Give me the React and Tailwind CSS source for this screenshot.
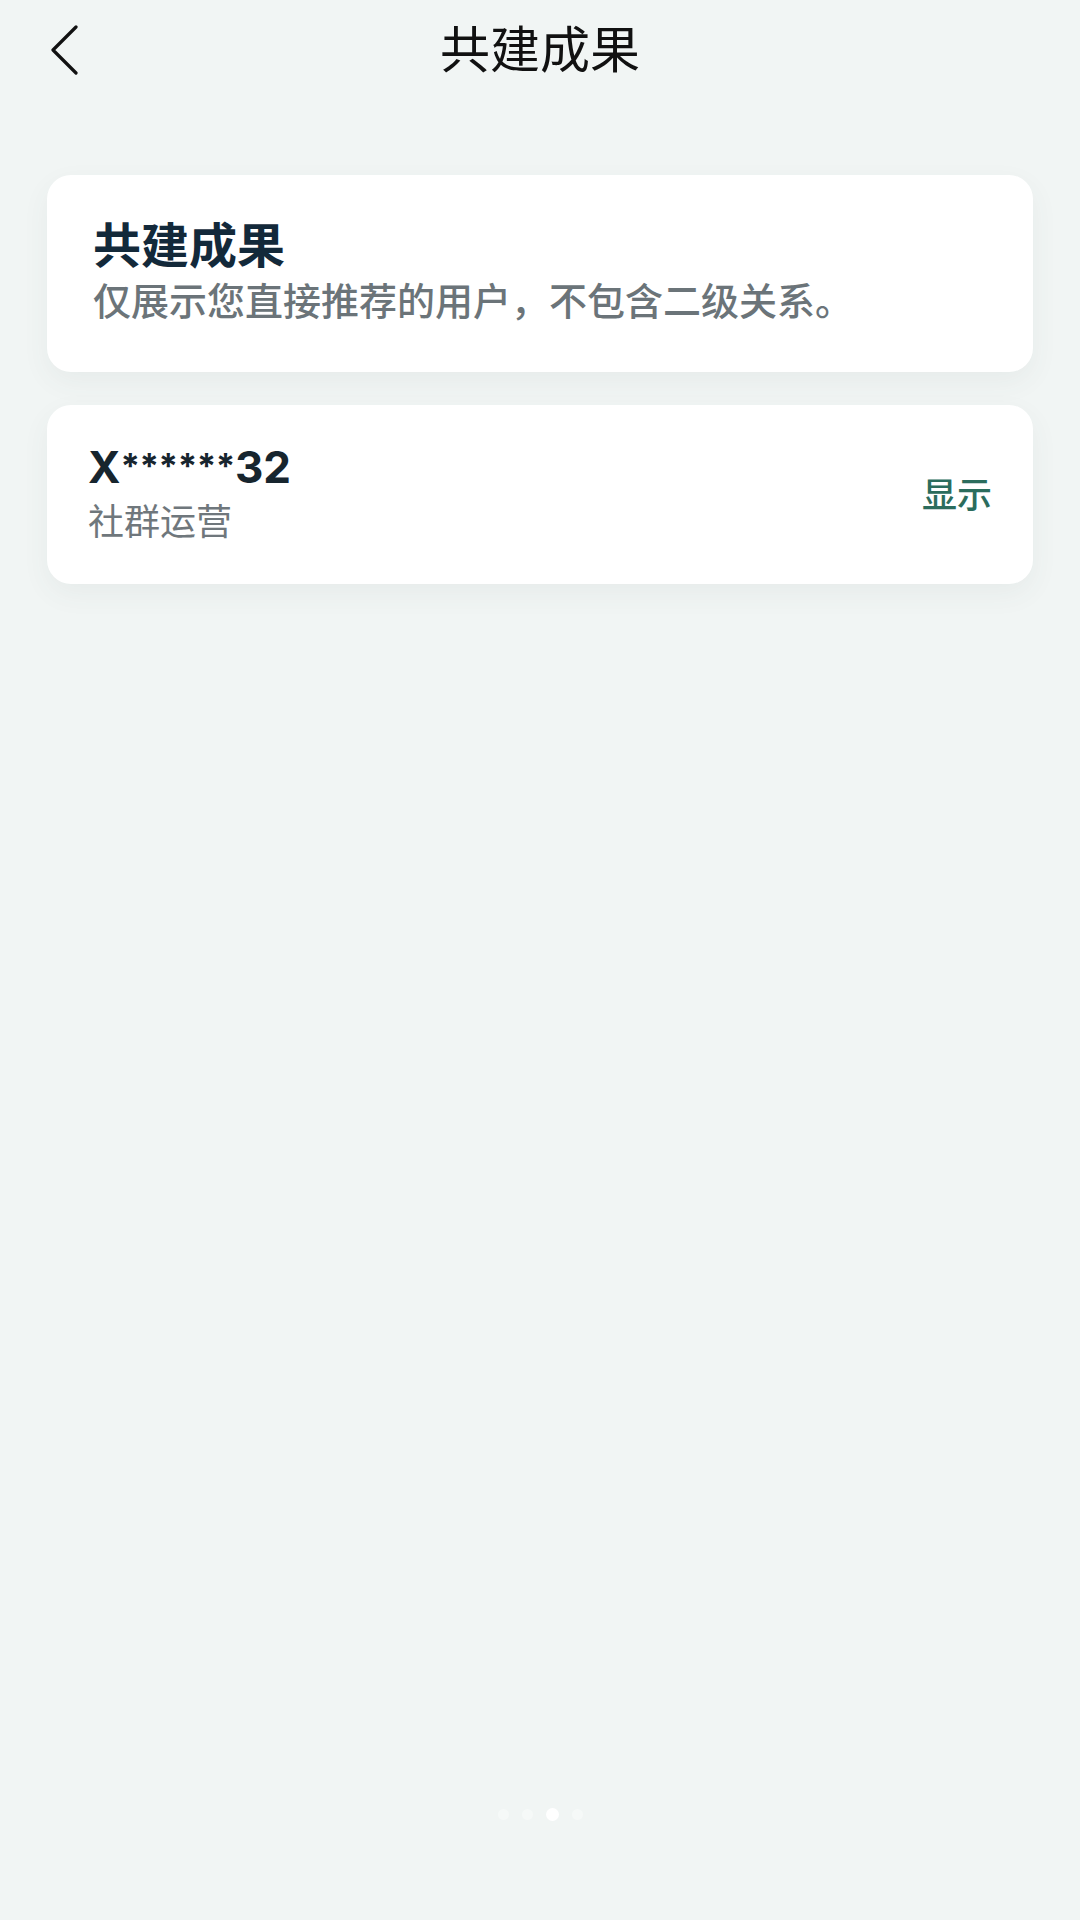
import React from "react";

const App = () => {
	return (
		<div className="min-h-[1920px] w-[1080px] bg-[#f1f5f4] flex flex-col font-['Inter','Noto_Sans_CJK_SC',sans-serif]">
			{/* Header */}
			<div className="relative h-[96px] flex items-center justify-center">
				<button className="absolute left-[44px] top-[22px] w-[40px] h-[56px] flex items-center justify-center">
					<svg width="32" height="50" viewBox="0 0 32 50" fill="none">
						<path d="M28 2 L5 25 L28 48" stroke="#111" strokeWidth="3.2" strokeLinecap="round" strokeLinejoin="round" />
					</svg>
				</button>
				<h1 className="-mt-[5px] text-[50px] leading-[60px] text-[#111] font-['Noto_Sans_CJK_SC',sans-serif] font-normal">共建成果</h1>
			</div>

			<div className="flex flex-col gap-[33px] px-[47px] mt-[79px]">
				{/* Intro card */}
				<div className="bg-white rounded-[24px] pl-[46px] pr-[40px] pt-[39px] pb-[49px] shadow-[0_10px_28px_rgba(60,80,80,0.06)]">
					<div className="text-[48px] leading-[56px] font-bold text-[#13293a] font-['Noto_Sans_CJK_SC',sans-serif]">共建成果</div>
					<div className="mt-[5px] text-[38px] leading-[48px] text-[#6b7479] font-medium font-['Noto_Sans_CJK_SC',sans-serif]">
						仅展示您直接推荐的用户，不包含二级关系。
					</div>
				</div>

				{/* Member card */}
				<div className="bg-white rounded-[24px] pl-[41px] pr-[41px] h-[179px] flex items-center justify-between shadow-[0_10px_28px_rgba(60,80,80,0.06)]">
					<div className="flex flex-col pb-[7px]">
						<div className="text-[44px] leading-[52px] font-bold text-[#17252e]">
							X<span className="relative -top-[4px] text-[35px] tracking-[-0.5px]">******</span>32
						</div>
						<div className="mt-[1px] text-[36px] leading-[44px] text-[#6f777c] font-['Noto_Sans_CJK_SC',sans-serif]">社群运营</div>
					</div>
					<div className="pb-[3px] text-[35px] leading-[44px] text-[#2b6c5d] font-medium font-['Noto_Sans_CJK_SC',sans-serif]">显示</div>
				</div>
			</div>

			<div className="flex-1" />

			{/* Page dots */}
			<div className="flex items-center justify-center gap-[13px] pb-[99px]">
				<span className="w-[11px] h-[11px] rounded-full bg-[#f6f9f8]" />
				<span className="w-[11px] h-[11px] rounded-full bg-[#f6f9f8]" />
				<span className="w-[13px] h-[13px] rounded-full bg-white" />
				<span className="w-[11px] h-[11px] rounded-full bg-[#f6f9f8]" />
			</div>
		</div>
	);
};

export default App;
